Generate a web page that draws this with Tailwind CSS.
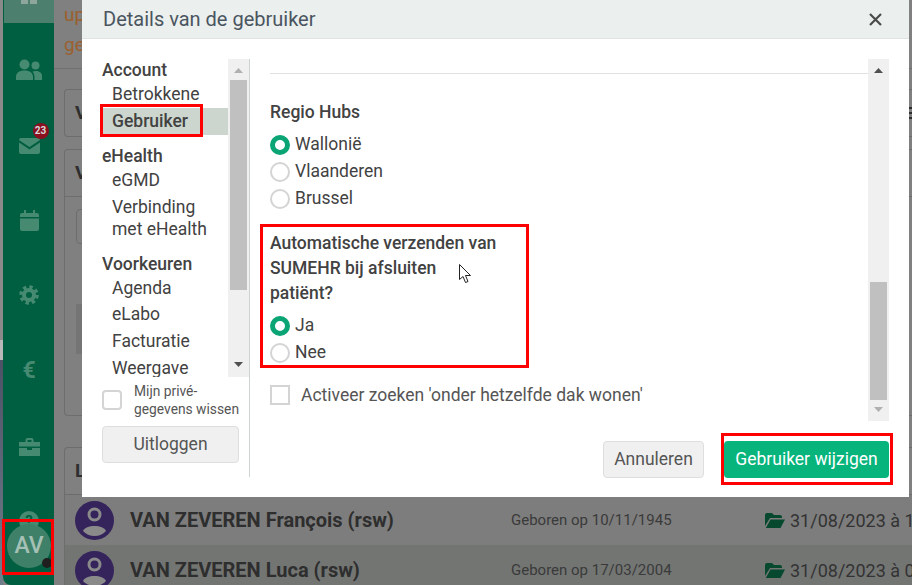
<!DOCTYPE html>
<html lang="nl">
<head>
  <meta charset="UTF-8">
  <title>Details van de gebruiker</title>
  <script src="https://cdn.jsdelivr.net/npm/@tailwindcss/browser@4"></script>
</head>
<body class="relative w-[912px] h-[585px] overflow-hidden bg-[#808080] font-['Roboto',sans-serif] text-[#424242]">
  <!-- page behind the modal -->
  <div class="flex h-[585px]">
    <div class="w-[3px] shrink-0 flex flex-col">
      <div class="h-[340px] bg-[#8a8a8a]"></div>
      <div class="h-[20px] bg-[#b8b8b8]"></div>
      <div class="flex-1 bg-gradient-to-b from-[#4d5266] to-[#6f7d8a]"></div>
    </div>
    <nav class="w-[51px] shrink-0 flex flex-col items-center pl-[1px] bg-[#005f40] rounded-bl-[8px] text-[#468a72]">
      <div class="w-full -ml-[1px] h-[23px] bg-[#4d7f6e] flex justify-center gap-[2px]">
        <span class="w-[7px] h-[4px] bg-[#8fa69c]"></span>
        <span class="w-[7px] h-[4px] bg-[#8fa69c]"></span>
      </div>
      <svg class="mt-[36px]" width="26" height="21" viewBox="0 0 26 21" fill="currentColor"><circle cx="8.5" cy="5.5" r="5"/><circle cx="19.5" cy="6.5" r="4"/><path d="M0 21v-3c0-4 3-6.500 8.500-6.500S17 14 17 18v3zM18.500 21v-3c0-2-.7-4-2-5.200 1-.5 2-.8 3.500-.8 4 0 6 2.500 6 5v4z"/></svg>
      <div class="relative mt-[58px]">
        <svg width="21" height="16" viewBox="0 0 21 16" fill="currentColor"><path d="M2 0h17a2 2 0 0 1 2 2L10.500 9 0 2a2 2 0 0 1 2-2zM0 4.500l10.500 7 10.500-7V14a2 2 0 0 1-2 2H2a2 2 0 0 1-2-2z"/></svg>
        <span class="absolute -top-[15px] left-[14px] w-[16px] h-[16px] rounded-full bg-[#8a0f1f] text-[#d8d8d8] text-[10px] font-bold leading-[16px] text-center">23</span>
      </div>
      <svg class="mt-[56px]" width="19" height="21" viewBox="0 0 19 21" fill="currentColor"><path d="M4 0h2v3h7V0h2v3h2a2 2 0 0 1 2 2v2H0V5a2 2 0 0 1 2-2h2zM0 8.500h19V19a2 2 0 0 1-2 2H2a2 2 0 0 1-2-2z"/></svg>
      <svg class="mt-[54px]" width="20" height="20" viewBox="0 0 20 20" fill="none" stroke="currentColor"><circle cx="10" cy="10" r="5" stroke-width="4"/><circle cx="10" cy="10" r="8" stroke-width="3.500" stroke-dasharray="3.300 3"/></svg>
      <span class="mt-[52px] text-[23px] leading-[27px] font-bold">€</span>
      <svg class="mt-[54px]" width="21" height="18" viewBox="0 0 21 18" fill="currentColor"><path d="M6.500 4V2a2 2 0 0 1 2-2h4a2 2 0 0 1 2 2v2H21v4.500H0V4zM8.500 2v2h4V2zM0 10h8v2h5v-2h8v8H0z"/></svg>
      <span class="mt-[55px] flex items-center justify-center w-[20px] h-[20px] rounded-full bg-current"><span class="text-[#005f40] text-[15px] leading-[20px] font-bold">?</span></span>
      <div class="relative -mt-[7px] w-[44px] h-[44px] rounded-full bg-[#3f8069] text-[#a5c0b5] text-[23px] font-medium leading-[44px] text-center">AV
        <span class="absolute right-[-1px] bottom-0 w-[10px] h-[10px] rounded-full bg-[#1f1f1f]"></span>
      </div>
    </nav>
    <main class="flex-1 min-w-0">
      <div class="h-[69px] pl-[10px] border-b border-[#6f6f6f] text-[#9c5f2e] text-[19px] leading-[30px]"><p>up</p><p>ge</p></div>
      <div class="pl-[10px]">
        <div class="mt-[20px] h-[48px] flex justify-between items-center border border-r-0 border-[#6d6d6d] rounded-l-[4px] pl-[10px] text-[#2e2e2e] text-[19px] font-bold">
          <span>V</span>
          <span class="flex flex-col gap-[3px]"><span class="w-[3px] h-[2px] bg-[#2e2e2e]"></span><span class="w-[3px] h-[2px] bg-[#2e2e2e]"></span><span class="w-[3px] h-[2px] bg-[#2e2e2e]"></span></span>
        </div>
        <div class="mt-[12px] h-[267px] border border-r-0 border-[#6d6d6d] rounded-l-[4px]">
          <div class="h-[47px] pl-[10px] border-b border-[#6d6d6d] text-[#2e2e2e] text-[19px] leading-[46px] font-bold">V</div>
          <div class="mt-[12px] ml-[11px] h-[35px] w-[10px] border border-[#6d6d6d] rounded-l-[4px]"></div>
          <div class="mt-[60px] ml-[11px] h-[50px] w-[10px] bg-[#757575]"></div>
        </div>
        <div class="mt-[31px] border border-r-0 border-[#6d6d6d] rounded-tl-[4px] pl-[10px] h-[48px] text-[#2e2e2e] text-[19px] leading-[46px] font-bold">L</div>
      </div>
      <div class="ml-[10px]">
        <div class="h-[50px] flex items-center pl-[10px] bg-[#7d7d7d] border-l border-[#6d6d6d]">
          <svg class="shrink-0" width="39" height="39" viewBox="0 0 39 39"><circle cx="19.500" cy="19.500" r="19.500" fill="#35245c"/><circle cx="19.500" cy="13.500" r="5.500" fill="none" stroke="#8a8a8a" stroke-width="3"/><path d="M8 30c1.500-3.500 6-5 11.500-5s10 1.500 11.500 5c-2.500 3-7 5-11.500 5S10.500 33 8 30z" fill="#8a8a8a"/></svg>
          <span class="ml-[16px] w-[381px] shrink-0 font-bold text-[20px] text-[#2e2e2e]">VAN ZEVEREN François (rsw)</span>
          <span class="w-[254px] shrink-0 text-[15px] text-[#3a3a3a]">Geboren op 10/11/1945</span>
          <svg class="shrink-0" width="20" height="15" viewBox="0 0 20 15" fill="#06492f"><path d="M0 13V2a2 2 0 0 1 2-2h5l2 2h6a2 2 0 0 1 2 2v1H5L0 13zM5.500 6.500H20L15.500 15H.8z"/></svg>
          <span class="ml-[5px] whitespace-nowrap text-[18px] text-[#333]">31/08/2023 à 1</span>
        </div>
        <div class="h-[50px] flex items-center pl-[10px] bg-[#737573] border-l border-[#6d6d6d]">
          <svg class="shrink-0" width="39" height="39" viewBox="0 0 39 39"><circle cx="19.500" cy="19.500" r="19.500" fill="#35245c"/><circle cx="19.500" cy="13.500" r="5.500" fill="none" stroke="#8a8a8a" stroke-width="3"/><path d="M8 30c1.500-3.500 6-5 11.500-5s10 1.500 11.500 5c-2.500 3-7 5-11.500 5S10.500 33 8 30z" fill="#8a8a8a"/></svg>
          <span class="ml-[16px] w-[381px] shrink-0 font-bold text-[20px] text-[#2e2e2e]">VAN ZEVEREN Luca (rsw)</span>
          <span class="w-[254px] shrink-0 text-[15px] text-[#3a3a3a]">Geboren op 17/03/2004</span>
          <svg class="shrink-0" width="20" height="15" viewBox="0 0 20 15" fill="#06492f"><path d="M0 13V2a2 2 0 0 1 2-2h5l2 2h6a2 2 0 0 1 2 2v1H5L0 13zM5.500 6.500H20L15.500 15H.8z"/></svg>
          <span class="ml-[5px] whitespace-nowrap text-[18px] text-[#333]">31/08/2023 à 0</span>
        </div>
      </div>
    </main>
  </div>

  <!-- modal -->
  <div class="absolute left-[82px] top-0 w-[827px] h-[497px] bg-white flex flex-col">
    <header class="h-[39px] shrink-0 flex items-center justify-between pl-[21px] pr-[27px] bg-[#ebefee] border-b border-[#dfe3e2]">
      <h2 class="text-[20px] text-[#4a5560]">Details van de gebruiker</h2>
      <svg width="13" height="13" viewBox="0 0 13 13" stroke="#4a4a4a" stroke-width="2.200"><path d="M1 1l11 11M12 1L1 12"/></svg>
    </header>
    <div class="flex pt-[20px] pl-[20px] pr-[20px]">
      <aside class="w-[148px] shrink-0 h-[418px] border-r border-[#ccd4d0]">
        <div class="flex h-[318px]">
          <div class="w-[126px] shrink-0 overflow-hidden">
            <p class="font-medium text-[17.5px] leading-[21px] pt-[1px]">Account</p>
            <p class="pl-[10px] text-[17.5px] leading-[27px]">Betrokkene</p>
            <p class="pl-[10px] text-[17.5px] leading-[27px] font-medium bg-[#ccd6cf]">Gebruiker</p>
            <p class="font-medium text-[17.5px] leading-[21px] mt-[11px]">eHealth</p>
            <p class="pl-[10px] text-[17.5px] leading-[27px]">eGMD</p>
            <p class="pl-[10px] text-[17.5px] leading-[22px] mt-[2px]">Verbinding<br>met eHealth</p>
            <p class="font-medium text-[17.5px] leading-[22px] mt-[13px]">Voorkeuren</p>
            <p class="pl-[10px] text-[17.5px] leading-[27px]">Agenda</p>
            <p class="pl-[10px] text-[17.5px] leading-[25px]">eLabo</p>
            <p class="pl-[10px] text-[17.5px] leading-[28px]">Facturatie</p>
            <p class="pl-[10px] text-[17.5px] leading-[27px]">Weergave</p>
          </div>
          <div class="w-[21px] shrink-0 flex flex-col items-center bg-[#f0f0f0]">
            <svg class="mt-[9px] mb-[7px]" width="9" height="5" viewBox="0 0 9 5" fill="#b0b0b0"><path d="M4.500 0L9 5H0z"/></svg>
            <div class="w-[17px] h-[210px] bg-[#c0c0c0]"></div>
            <svg class="mt-[72px]" width="9" height="5" viewBox="0 0 9 5" fill="#505050"><path d="M0 0h9L4.500 5z"/></svg>
          </div>
        </div>
        <label class="flex items-center mt-[5px]">
          <span class="w-[20px] h-[20px] shrink-0 rounded-[4px] border-2 border-[#d4d4d4]"></span>
          <span class="ml-[12px] text-[13.8px] leading-[18px] whitespace-nowrap text-[#555]">Mijn privé-<br>gegevens wissen</span>
        </label>
        <button class="mt-[8px] w-[137px] h-[37px] rounded-[4px] bg-[#f0f0f0] border border-[#dedede] text-[17.5px] text-[#555]">Uitloggen</button>
      </aside>
      <section class="flex-1 min-w-0 pl-[20px]">
        <div class="flex h-[362px]">
          <div class="w-[598px] shrink-0">
            <div class="h-[15px] border-b border-[#e0e2e1]"></div>
            <p class="mt-[26px] text-[17.5px] leading-[24px] font-medium">Regio Hubs</p>
            <div class="mt-[7px] flex items-center h-[27px]"><span class="w-[20px] h-[20px] rounded-full border-[5px] border-[#0ba474]"></span><span class="ml-[5px] text-[17.5px]">Wallonië</span></div>
            <div class="flex items-center h-[27px]"><span class="w-[20px] h-[20px] rounded-full border-2 border-[#d4d4d4]"></span><span class="ml-[5px] text-[17.5px]">Vlaanderen</span></div>
            <div class="flex items-center h-[27px]"><span class="w-[20px] h-[20px] rounded-full border-2 border-[#d4d4d4]"></span><span class="ml-[5px] text-[17.5px]">Brussel</span></div>
            <p class="mt-[19px] w-[228px] text-[17.5px] leading-[25px] font-medium">Automatische verzenden van SUMEHR bij afsluiten patiënt?</p>
            <div class="mt-[6px] flex items-center h-[27px]"><span class="w-[20px] h-[20px] rounded-full border-[5px] border-[#0ba474]"></span><span class="ml-[5px] text-[17.5px]">Ja</span></div>
            <div class="flex items-center h-[27px]"><span class="w-[20px] h-[20px] rounded-full border-2 border-[#d4d4d4]"></span><span class="ml-[5px] text-[17.5px]">Nee</span></div>
            <label class="mt-[16px] flex items-center">
              <span class="w-[20px] h-[20px] border-2 border-[#d4d4d4]"></span>
              <span class="ml-[11px] text-[17.5px] text-[#555]">Activeer zoeken 'onder hetzelfde dak wonen'</span>
            </label>
          </div>
          <div class="w-[21px] shrink-0 flex flex-col items-center bg-[#f0f0f0]">
            <svg class="mt-[9px]" width="9" height="5" viewBox="0 0 9 5" fill="#505050"><path d="M4.500 0L9 5H0z"/></svg>
            <div class="mt-[209px] w-[17px] h-[118px] bg-[#c0c0c0]"></div>
            <svg class="mt-[7px]" width="9" height="5" viewBox="0 0 9 5" fill="#b0b0b0"><path d="M0 0h9L4.500 5z"/></svg>
          </div>
        </div>
        <div class="mt-[20px] flex justify-end gap-[20px]">
          <button class="w-[101px] h-[37px] rounded-[4px] bg-[#f0f0f0] border border-[#dedede] text-[17.5px] text-[#555]">Annuleren</button>
          <button class="w-[165px] h-[37px] rounded-[4px] bg-[#06b47c] text-[17.5px] text-white">Gebruiker wijzigen</button>
        </div>
      </section>
    </div>
  </div>

  <!-- red annotation boxes drawn over the screenshot -->
  <div class="absolute left-[100px] top-[104px] w-[103px] h-[33px] border-[3px] border-[#ff0000]"></div>
  <div class="absolute left-[260px] top-[224px] w-[269px] h-[144px] border-[3px] border-[#ff0000]"></div>
  <div class="absolute left-[721px] top-[433px] w-[172px] h-[52px] border-[3px] border-[#ff0000]"></div>
  <div class="absolute left-[2px] top-[519px] w-[52px] h-[56px] border-[3px] border-[#ff0000]"></div>
  <svg class="absolute left-[459px] top-[264px]" width="13" height="20" viewBox="0 0 13 20" fill="#fff" stroke="#222"><path d="M.5.5v15l3.500-3 2.500 6 2.500-1-2.500-6h5z"/></svg>
</body>
</html>
